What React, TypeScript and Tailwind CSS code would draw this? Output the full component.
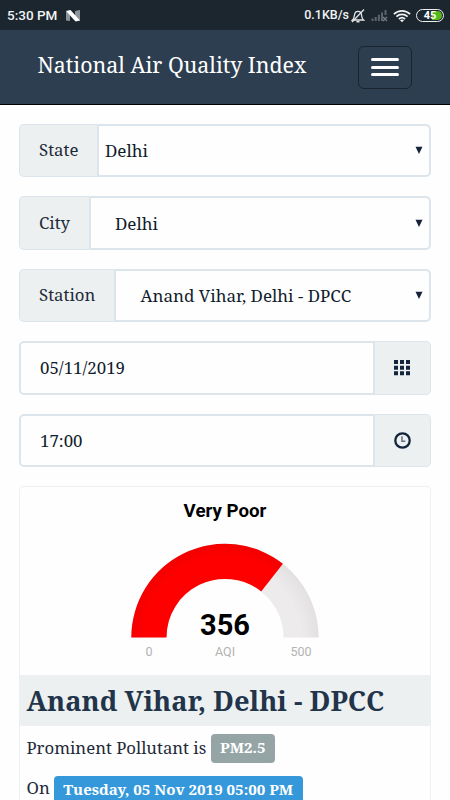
import type { ReactNode } from 'react';

const serif = 'font-["Noto_Serif","DejaVu_Serif_Condensed","DejaVu_Serif",serif] [font-stretch:condensed]';

/* Barra de estado del teléfono */
function StatusBar() {
  return (
    <div className="flex h-[30px] items-center justify-between bg-[#1c262f] pl-[7px] pr-[6px] pt-px font-[Roboto,sans-serif] text-[#f1f3f4]">
      <div className="flex items-center">
        <span className="text-[13.5px] font-medium leading-none">5:30 PM</span>
        <svg className="ml-[9px]" width="15" height="12" viewBox="0 0 15 12">
          <path d="M0 1.500L4 4v7l-4-0.500zM14 0v11L9 7V1z" fill="#8d9499" />
          <path d="M0 1L4.500 0 14 10.500 9.500 11.500z" fill="#fff" />
        </svg>
      </div>
      <div className="flex items-center">
        <span className="text-[12.500px] font-medium leading-none">0.1KB/s</span>
        <svg className="ml-[2px]" width="14" height="14" viewBox="0 0 14 14" fill="none" stroke="#e4e7e9" strokeWidth="1.300">
          <path d="M1.500 11h11c-1.500-1.200-1.800-3-2-5C10.300 3.500 9 2.300 7 2.300S3.800 3.500 3.500 6c-.2 2-.5 3.800-2 5z" />
          <path d="M13 0.500L1 13" />
          <path d="M5.500 12.700h3" strokeWidth="1.500" />
        </svg>
        <svg className="ml-[6px]" width="17" height="13" viewBox="0 0 17 13">
          <path d="M0.500 9.500h2V12h-2zM3.700 8h2v4h-2zM6.900 5.800h2V12h-2zM10 3.500h2V12h-2zM13.500 1h2v5h-2z" fill="#5c656c" />
          <path d="M12 8l4 4M16 8l-4 4" stroke="#737b81" strokeWidth="1.300" />
        </svg>
        <svg className="ml-[5px]" width="18" height="14" viewBox="0 0 18 14" fill="none" stroke="#f1f3f4" strokeWidth="1.700">
          <path d="M0.900 5.200c4.600-4.400 11.600-4.400 16.200 0" />
          <path d="M3.400 7.600c3.200-3 8-3 11.200 0" />
          <path d="M5.900 10c1.800-1.600 4.400-1.600 6.200 0" />
          <path d="M7 11.300c1.200-1 2.800-1 4 0L9 13.300z" fill="#f1f3f4" stroke="none" />
        </svg>
        <div className="relative ml-[5px] flex h-[13px] w-[28px] items-center justify-center overflow-hidden rounded-full border-[1.5px] border-[#eef0f1]">
          <div className="absolute bottom-[1px] left-[15px] right-[1px] top-[1px] rounded-r-full bg-[#53b91c]" />
          <span className="relative text-[11px] font-bold leading-none text-white">45</span>
        </div>
      </div>
    </div>
  );
}

function Header() {
  return (
    <header className="flex h-[75px] items-center justify-between border-b border-black bg-[#2c3e50] pl-[37.500px] pr-[38px]">
      <h1 className={`${serif} relative -top-[2px] whitespace-nowrap text-[21.350px] leading-none text-white`}>
        National Air Quality Index
      </h1>
      <button className="flex h-[43px] w-[54px] shrink-0 flex-col items-center justify-center gap-[4.500px] rounded-[6px] border border-[#1a242f]">
        <span className="h-[3px] w-[28px] rounded-full bg-white" />
        <span className="h-[3px] w-[28px] rounded-full bg-white" />
        <span className="h-[3px] w-[28px] rounded-full bg-white" />
      </button>
    </header>
  );
}

interface SelectProps {
  label: string;
  value: string;
  labelWidth: string;
  indent: string;
}

function SelectRow({ label, value, labelWidth, indent }: SelectProps) {
  return (
    <div className={`${serif} flex h-[53.500px] text-[17px]`}>
      <div className={`${labelWidth} flex shrink-0 items-center rounded-l-[5px] border border-r-0 border-[#dce4ec] bg-[#ecf0f1] pb-px pl-[19px] text-[16.800px] text-[#1f2a38]`}>
        {label}
      </div>
      <div className={`${indent} flex flex-1 items-center justify-between rounded-r-[5px] border-2 border-[#dce4ec] pr-[6px] text-[#101c2c]`}>
        <span className="whitespace-nowrap pt-px">{value}</span>
        <svg width="8" height="8" viewBox="0 0 8 8">
          <path d="M0.500 0.700h7L4 8z" fill="#15243a" />
        </svg>
      </div>
    </div>
  );
}

function InputRow({ value, icon }: { value: string; icon: ReactNode }) {
  return (
    <div className={`${serif} flex h-[53.500px] text-[16.850px]`}>
      <div className="flex flex-1 items-center rounded-l-[5px] border-2 border-[#dce4ec] pl-[19px] text-[#101c2c]">
        {value}
      </div>
      <div className="flex w-[56px] items-center justify-center rounded-r-[5px] border border-l-0 border-[#dce4ec] bg-[#ecf0f1]">
        {icon}
      </div>
    </div>
  );
}

const gridIcon = (
  <svg className="mt-px mr-px" width="16" height="16" viewBox="0 0 16 16" fill="#14253b">
    <path d="M0 0h4v4H0zM6 0h4v4H6zM12 0h4v4h-4zM0 5.700h4v4H0zM6 5.700h4v4H6zM12 5.700h4v4h-4zM0 11.300h4v4H0zM6 11.300h4v4H6zM12 11.300h4v4h-4z" />
  </svg>
);

const clockIcon = (
  <svg width="17" height="17" viewBox="0 0 17 17" fill="none">
    <circle cx="8.500" cy="8.500" r="7.200" stroke="#14253b" strokeWidth="2.300" />
    <path d="M8 4.300v5h3.300" stroke="#67717c" strokeWidth="1.500" />
  </svg>
);

/* Medidor semicircular: 356 de 500 */
function Gauge() {
  return (
    <svg className="block [font-stretch:normal]" width="411" height="188" viewBox="20 487 411 188" fontFamily="Roboto, sans-serif" textAnchor="middle">
      <defs>
        <radialGradient id="track" gradientUnits="userSpaceOnUse" cx="225" cy="639" r="95">
          <stop offset="0.800" stopColor="#edebeb" />
          <stop offset="1" stopColor="#e2e0e0" />
        </radialGradient>
        <radialGradient id="level" gradientUnits="userSpaceOnUse" cx="225" cy="639" r="96">
          <stop offset="0.850" stopColor="#ff0000" />
          <stop offset="1" stopColor="#f20000" />
        </radialGradient>
      </defs>
      <text x="225" y="516.500" fontSize="18.700" fontWeight="700" fill="#000">Very Poor</text>
      <path d="M131.300 637.500A93.700 93.700 0 0 1 318.700 637.500H283.500A58.500 58.500 0 0 0 166.500 637.500z" fill="url(#track)" />
      <path d="M131.300 637.500A93.700 93.700 0 0 1 282.900 563.800L261.200 591.500A58.500 58.500 0 0 0 166.500 637.500z" fill="url(#level)" />
      <text x="225" y="634.500" fontSize="29" fontWeight="700" fill="#000">356</text>
      <g fontSize="12.500" fill="#b3b3b3">
        <text x="149" y="655.500">0</text>
        <text x="225" y="655.500">AQI</text>
        <text x="301" y="655.500">500</text>
      </g>
    </svg>
  );
}

export default function App() {
  return (
    <div className="h-[800px] w-[450px] overflow-hidden bg-[#fefefe]">
      <StatusBar />
      <Header />
      <main className="flex flex-col gap-[19px] pl-[19px] pr-[19px] pt-[18.600px]">
        <SelectRow label="State" value="Delhi" labelWidth="w-[78px]" indent="pl-[6px]" />
        <SelectRow label="City" value="Delhi" labelWidth="w-[70px]" indent="pl-[24px]" />
        <SelectRow label="Station" value="Anand Vihar, Delhi - DPCC" labelWidth="w-[95px]" indent="pl-[24.500px]" />
        <InputRow value="05/11/2019" icon={gridIcon} />
        <InputRow value="17:00" icon={clockIcon} />
        <section className={`${serif} rounded-t-[5px] border border-b-0 border-[#ecf0f1] text-[#1f2a38]`}>
          <Gauge />
          <h2 className="flex h-[51px] items-center whitespace-nowrap bg-[#ecf0f1] pl-[6.500px] text-[27.250px] font-bold leading-none text-[#22344a]">
            Anand Vihar, Delhi - DPCC
          </h2>
          <p className="mt-[8px] flex h-[29px] items-center whitespace-nowrap pl-[6.500px] text-[16.750px]">
            <span className="pb-[2px]">Prominent Pollutant is</span>
            <span className="ml-[4.500px] flex h-[29px] w-[64px] items-center justify-center rounded-[4px] bg-[#95a5a6] pb-[2px] text-[15.100px] font-bold text-white">
              PM2.5
            </span>
          </p>
          <p className="mt-[13px] flex h-[26px] items-start whitespace-nowrap pl-[6.500px] text-[16.750px] leading-[24px]">
            <span>On</span>
            <span className="ml-[4px] flex h-[29px] w-[249px] items-center justify-center rounded-[4px] bg-[#3498db] pb-[3px] text-[15.100px] font-bold text-white">
              Tuesday, 05 Nov 2019 05:00 PM
            </span>
          </p>
        </section>
      </main>
    </div>
  );
}
